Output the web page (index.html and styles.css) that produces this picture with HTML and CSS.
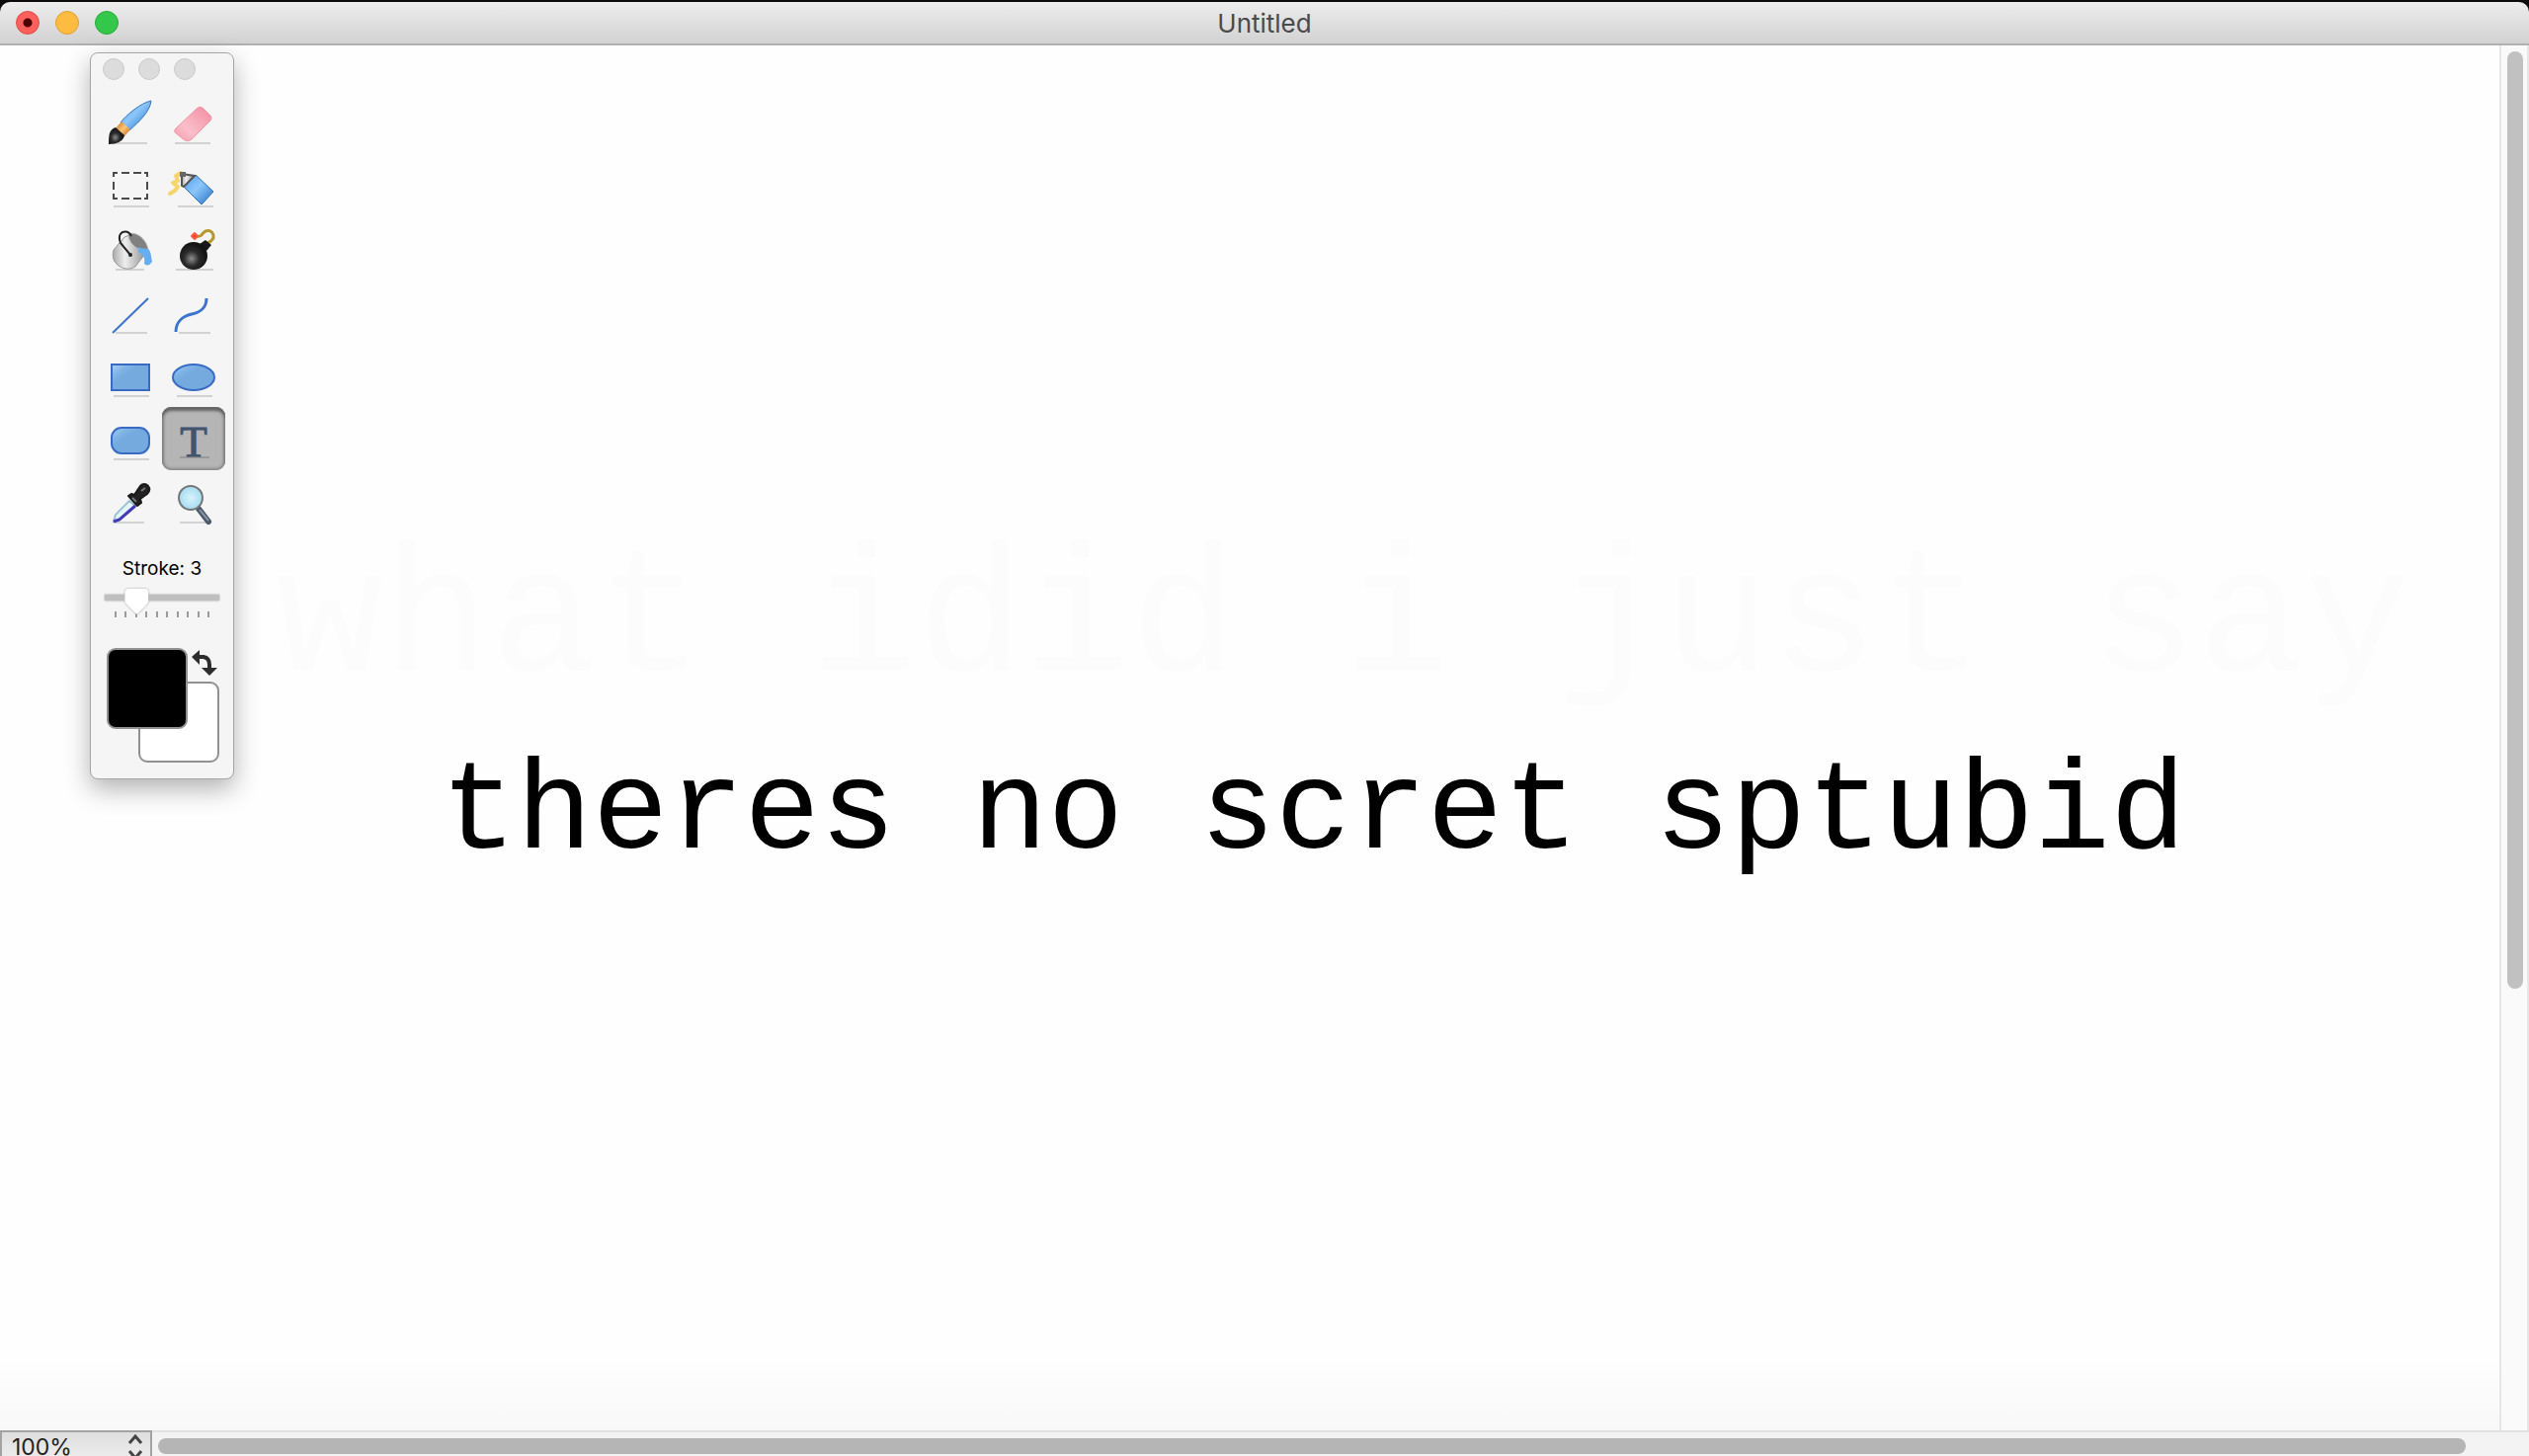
FILE: index.html
```html
<!DOCTYPE html>
<html lang="en">
<head>
<meta charset="utf-8">
<title>Untitled</title>
<link rel="stylesheet" href="styles.css">
</head>
<body>
<div class="window">
  <header class="titlebar">
    <div class="lights">
      <button class="light close" aria-label="Close"></button>
      <button class="light minimize" aria-label="Minimize"></button>
      <button class="light maximize" aria-label="Zoom window"></button>
    </div>
    <h1 class="title">Untitled</h1>
  </header>

  <main class="workspace">
    <section class="canvas" aria-label="Canvas">
      <p class="ink faint">what idid i just say</p>
      <p class="ink bold">theres no scret sptubid</p>
    </section>
    <div class="scroll-v"><div class="thumb-v"></div></div>
  </main>

  <footer class="statusbar">
    <div class="zoom">
      <select class="zoom-select" aria-label="Zoom level"><option>100%</option></select>
      <svg class="zoom-arrows" viewBox="0 0 16 26" aria-hidden="true"><path d="M2 10l6-7 6 7M2 18l6 7 6-7"/></svg>
    </div>
    <div class="scroll-h"><div class="thumb-h"></div></div>
  </footer>
</div>

<aside class="palette" aria-label="Tools">
  <div class="palette-lights"><span class="dot"></span><span class="dot"></span><span class="dot"></span></div>
  <div class="tools">
    <button class="tool" aria-label="Brush">
      <svg viewBox="0 0 64 64">
        <defs>
          <linearGradient id="blue" x1="0" y1="0" x2="1" y2="1"><stop offset="0" stop-color="#4f9de8"/><stop offset=".45" stop-color="#8cc6fa"/><stop offset="1" stop-color="#2271c6"/></linearGradient>
          <linearGradient id="gold" x1="0" y1="0" x2="1" y2="1"><stop offset="0" stop-color="#b56a17"/><stop offset=".5" stop-color="#ffc477"/><stop offset="1" stop-color="#b9600c"/></linearGradient>
          <radialGradient id="dark" cx=".42" cy=".6" r=".55"><stop offset="0" stop-color="#8d8d8d"/><stop offset=".5" stop-color="#2b2b2b"/><stop offset="1" stop-color="#131313"/></radialGradient>
          <linearGradient id="pink" x1="0" y1="1" x2="1" y2="0"><stop offset="0" stop-color="#f79aac"/><stop offset=".35" stop-color="#fabfca"/><stop offset=".7" stop-color="#f6a3b4"/><stop offset="1" stop-color="#f28ea4"/></linearGradient>
          <linearGradient id="steel" x1="0" y1="0" x2="1" y2="0"><stop offset="0" stop-color="#aaa"/><stop offset=".35" stop-color="#eee"/><stop offset="1" stop-color="#888"/></linearGradient>
          <linearGradient id="fill" x1="0" y1="0" x2="1" y2="1"><stop offset="0" stop-color="#a9d1f6"/><stop offset=".25" stop-color="#7fb3e6"/><stop offset=".4" stop-color="#75aadf"/><stop offset="1" stop-color="#75aadf"/></linearGradient>
          <radialGradient id="glass"><stop offset="0" stop-color="#d9f3fb"/><stop offset="1" stop-color="#a5dcf1"/></radialGradient>
        </defs>
        <path class="shade" d="M14 53h35"/>
        <path d="M53 10c-10 2-25 14-31 22l9 8c9-8 21-19 22-30z" fill="url(#blue)" stroke="#3976bd"/>
        <path d="M23 31l9 8-6 7-9-8z" fill="url(#gold)"/>
        <path d="M17 37l9 8c-1 6-8 9-16 9 0-8 0-15 7-17z" fill="url(#dark)"/>
      </svg>
    </button>
    <button class="tool" aria-label="Eraser">
      <svg viewBox="0 0 64 64"><path class="shade" d="M13 53h36"/><path d="M35 18q3-3 6-1l8 8q2 2 0 5L30 49q-4 3-7 1l-10-8q-1-2 1-4z" fill="url(#pink)" stroke="#f294a8" stroke-width="1"/></svg>
    </button>
    <button class="tool" aria-label="Select">
      <svg viewBox="0 0 64 64"><path class="shade" d="M15 53h36"/><path d="M15 23v-4h4M23 19h8M35 19h8M46 19h3v4M49 28v8M49 40v5h-3M43 45h-8M31 45h-8M19 45h-4v-5M15 36v-8" fill="none" stroke="#4b4b4b" stroke-width="2"/></svg>
    </button>
    <button class="tool" aria-label="Airbrush">
      <svg viewBox="0 0 64 64"><path class="shade" d="M16 53h36"/><path d="M19 19l-5 3 2 5-5 2 5 4-3 4-5 3" fill="none" stroke="#f5d56a" stroke-width="4" stroke-linejoin="round" stroke-linecap="round"/><path d="M22 33l12-12 18 17-12 13z" fill="url(#blue)" stroke="#2c6db9"/><path d="M20 20l13 2-11 11-2-1z" fill="url(#steel)" stroke="#555" stroke-width="2"/><path d="M18 18h6v5h-6z" fill="#666"/></svg>
    </button>
    <button class="tool" aria-label="Fill">
      <svg viewBox="0 0 64 64"><path class="shade" d="M17 53h29"/><path d="M26 20L15 33q-3 10 5 16 9 6 17 1l13-17q-4-12-16-16z" fill="url(#steel)" stroke="#999"/><path d="M30 17c7-3 18 4 20 16-7 3-20-5-20-16z" fill="#808080" stroke="#b5b5b5"/><path d="M40 30c4 3 8 0 11 3 2 3 2 7 3 12q-4 6-8 2c1-7-1-9-6-12z" fill="#65aff0"/><path d="M32 38L22 26q-3-8 2-11 6-2 9 4" fill="none" stroke="#222" stroke-width="2"/><circle cx="32" cy="38" r="2" fill="#222"/></svg>
    </button>
    <button class="tool" aria-label="Bomb">
      <svg viewBox="0 0 64 64"><path class="shade" d="M14 53h38"/><path d="M46 26q7-3 6-8-2-6-8-4-3 2-4 4-2 2-6 1" fill="none" stroke="#b5972b" stroke-width="3"/><path d="M38 27l6-4 6 5-5 6z" fill="#181818"/><circle cx="32" cy="39" r="14" fill="url(#dark)"/><path d="M33 16l3 3-3 3-3-3z" fill="#ff3a22" stroke="#ff5a42" stroke-width="2" stroke-linejoin="round"/></svg>
    </button>
    <button class="tool" aria-label="Line">
      <svg viewBox="0 0 64 64"><path class="shade" d="M17 53h32"/><path d="M14 53L50 18" stroke="#3c74cd" stroke-width="2"/></svg>
    </button>
    <button class="tool" aria-label="Curve">
      <svg viewBox="0 0 64 64"><path class="shade" d="M17 53h32"/><path d="M14 52c0-10 7-16 16-18s15-6 15-16" fill="none" stroke="#3c74cd" stroke-width="3"/></svg>
    </button>
    <button class="tool" aria-label="Rectangle">
      <svg viewBox="0 0 64 64"><path class="shade" d="M15 53h36"/><rect x="13" y="21" width="38" height="26" fill="url(#fill)" stroke="#3a6bc4" stroke-width="2"/></svg>
    </button>
    <button class="tool" aria-label="Ellipse">
      <svg viewBox="0 0 64 64"><path class="shade" d="M15 53h36"/><ellipse cx="32" cy="34" rx="21" ry="13" fill="url(#fill)" stroke="#3a6bc4" stroke-width="2"/></svg>
    </button>
    <button class="tool" aria-label="Rounded rectangle">
      <svg viewBox="0 0 64 64"><path class="shade" d="M15 53h36"/><rect x="13" y="21" width="38" height="26" rx="10" fill="url(#fill)" stroke="#3a6bc4" stroke-width="2"/></svg>
    </button>
    <button class="tool selected" aria-label="Text" aria-pressed="true">
      <svg viewBox="0 0 64 64"><path class="shade" d="M18 51h30"/><text class="glyph" x="32" y="50" text-anchor="middle">T</text></svg>
    </button>
    <button class="tool" aria-label="Eyedropper">
      <svg viewBox="0 0 64 64"><path class="shade" d="M16 53h30"/><path d="M31 31L17 45l-2 7 6-2 16-14z" fill="#e4f6fb" stroke="#9cc4d3" stroke-width="2"/><path d="M37 36L21 50l-6 2" fill="none" stroke="#433bb5" stroke-width="3"/><path d="M30 26l3-2 3 1 6-9q4-4 8 0 3 4-1 8l-7 5 1 4-4 3z" fill="#222" stroke="#191919" stroke-width="2" stroke-linejoin="round"/><path d="M34 28l4 4M43 21l4-3" stroke="#777" stroke-width="2"/></svg>
    </button>
    <button class="tool" aria-label="Magnifier">
      <svg viewBox="0 0 64 64"><path class="shade" d="M18 53h30"/><path d="M37 39l10 13" stroke="#4a5867" stroke-width="6" stroke-linecap="round"/><path d="M38 40l9 11" stroke="#8595a5" stroke-width="2"/><circle cx="29" cy="28" r="12" fill="url(#glass)" stroke="#767676" stroke-width="2"/></svg>
    </button>
  </div>
  <label class="stroke-label" for="stroke">Stroke: 3</label>
  <div class="slider">
    <input class="stroke-range" id="stroke" type="range" min="1" max="10" value="3">
    <div class="ticks"><i></i><i></i><i></i><i></i><i></i><i></i><i></i><i></i><i></i><i></i></div>
  </div>
  <div class="colors">
    <button class="swatch background" aria-label="Background color"></button>
    <button class="swatch foreground" aria-label="Foreground color"></button>
    <button class="swap" aria-label="Swap colors"><svg viewBox="0 0 26 26"><path d="M7 7h5q6 1 6 8v4" fill="none" stroke="#2d2d2d" stroke-width="4"/><path d="M0 7l8-7v15zM10 18h16l-8 8z" fill="#2d2d2d"/></svg></button>
  </div>
</aside>
</body>
</html>
```

FILE: styles.css
```css
* { box-sizing: border-box; }
body {
  margin: 0;
  background: #0b0b0b;
  font-family: Inter, "Liberation Sans", sans-serif;
}
button { margin: 0; padding: 0; border: 0; background: none; }

.window {
  display: grid;
  grid-template-rows: 44px 1fr 26px;
  height: 100vh;
  padding-top: 2px;
}

.titlebar {
  display: grid;
  grid-template-columns: 1fr auto 1fr;
  align-items: center;
  padding: 0 16px;
  border-bottom: 2px solid #b1b1b1;
  border-radius: 10px 10px 0 0;
  background: linear-gradient(#ededed, #d2d2d2);
}
.lights { display: flex; gap: 16px; }
.light { width: 24px; height: 24px; border: 1px solid; border-radius: 50%; }
.close { border-color: #e2463f; background: radial-gradient(circle, #4d0000 4px, #fc605c 5px); }
.minimize { border-color: #dfa034; background: #fdbc40; }
.maximize { border-color: #27aa35; background: #34c84a; }
.title { margin: 0; padding-top: 2px; color: #4a4a4a; font-size: 26px; font-weight: 400; line-height: 32px; }

.workspace { display: grid; grid-template-columns: 1fr 30px; min-height: 0; }
.canvas {
  position: relative;
  overflow: hidden;
  background: linear-gradient(to top, #f8f8f8, #fefefe 70px);
}
.ink {
  position: absolute;
  margin: 0;
  font-family: "Courier New", "Liberation Mono", monospace;
  white-space: pre;
}
.faint { left: 280px; top: 484px; color: #fcfcfc; font-size: 180px; line-height: 200px; }
.bold { left: 446px; top: 706px; color: #000; font-size: 128px; line-height: 144px; }

.scroll-v {
  padding: 6px 4px 0 6px;
  border-left: 2px solid #e6e6e6;
  border-right: 2px solid #e6e6e6;
  background: #fafafa;
}
.thumb-v { width: 16px; height: 68%; border-radius: 8px; background: #c1c1c1; }

.statusbar { display: grid; grid-template-columns: 154px 1fr; overflow: hidden; background: #f3f3f3; }
.zoom { position: relative; height: 34px; }
.zoom-select {
  width: 100%;
  height: 34px;
  padding: 0 10px;
  border: 2px solid #a3a3a3;
  border-radius: 0;
  appearance: none;
  background: linear-gradient(#dedede, #efefef);
  color: #222;
  font: 23px/28px Inter, sans-serif;
}
.zoom-arrows { position: absolute; right: 9px; top: 3px; width: 16px; height: 26px; fill: none; stroke: #444; stroke-width: 3; pointer-events: none; }
.scroll-h { padding: 6px 64px 0 6px; border-top: 2px solid #e2e2e2; }
.thumb-h { height: 16px; border-radius: 8px; background: #b5b5b5; }

.palette {
  position: absolute;
  left: 91px;
  top: 53px;
  width: 146px;
  padding: 5px 8px 16px;
  border: 1px solid #a5a5a5;
  border-radius: 8px;
  background: #f5f5f5;
  box-shadow: 0 10px 26px rgba(0, 0, 0, .3);
}
.palette-lights { display: flex; gap: 14px; padding: 0 4px 11px; }
.dot { width: 22px; height: 22px; border: 1px solid #cacaca; border-radius: 50%; background: #dcdcdc; }
.tools { display: grid; grid-template-columns: 64px 64px; }
.tool { height: 64px; border-radius: 9px; }
.tool svg { display: block; width: 64px; height: 64px; }
.shade { stroke: #d2d2d4; stroke-width: 2; }
.selected { background: #b5b5b5; box-shadow: inset 0 4px 3px #666, inset 0 0 3px 2px #888; }
.selected .shade { stroke: #999; }
.glyph { fill: #42536e; stroke: #42536e; stroke-width: 1; font: 45px "Liberation Serif", serif; }

.stroke-label { display: block; padding-top: 24px; font-size: 19px; line-height: 24px; text-align: center; }
.slider { padding: 8px 6px 0; }
.stroke-range {
  display: block;
  width: 100%;
  height: 26px;
  margin: 0;
  border-radius: 3px;
  appearance: none;
  background: linear-gradient(#bfbfbf, #bfbfbf) 0 6px / 100% 6px no-repeat;
  filter: drop-shadow(0 0 1px rgba(0, 0, 0, .35));
}
.stroke-range::-webkit-slider-thumb {
  width: 24px;
  height: 26px;
  appearance: none;
  background: #fff;
  clip-path: path("M4 0H20Q24 0 24 4V12Q24 14 22 16L12 26L2 16Q0 14 0 12V4Q0 0 4 0Z");
}
.ticks { display: flex; justify-content: space-between; height: 6px; margin-top: -3px; padding: 0 10px; }
.ticks i { width: 2px; background: #9b9b9b; }

.colors { display: grid; grid-template-columns: 32px 50px 32px; grid-template-rows: 34px 48px 34px; padding: 31px 8px 0; }
.swatch { width: 82px; height: 82px; border: 2px solid #919191; border-radius: 9px; }
.foreground { grid-area: 1 / 1 / 3 / 3; background: #000; }
.background { grid-area: 2 / 2 / 4 / 4; background: #fff; }
.swap { grid-area: 1 / 3; width: 26px; height: 26px; margin: 2px 0 0 4px; }
.swap svg { display: block; }
```
